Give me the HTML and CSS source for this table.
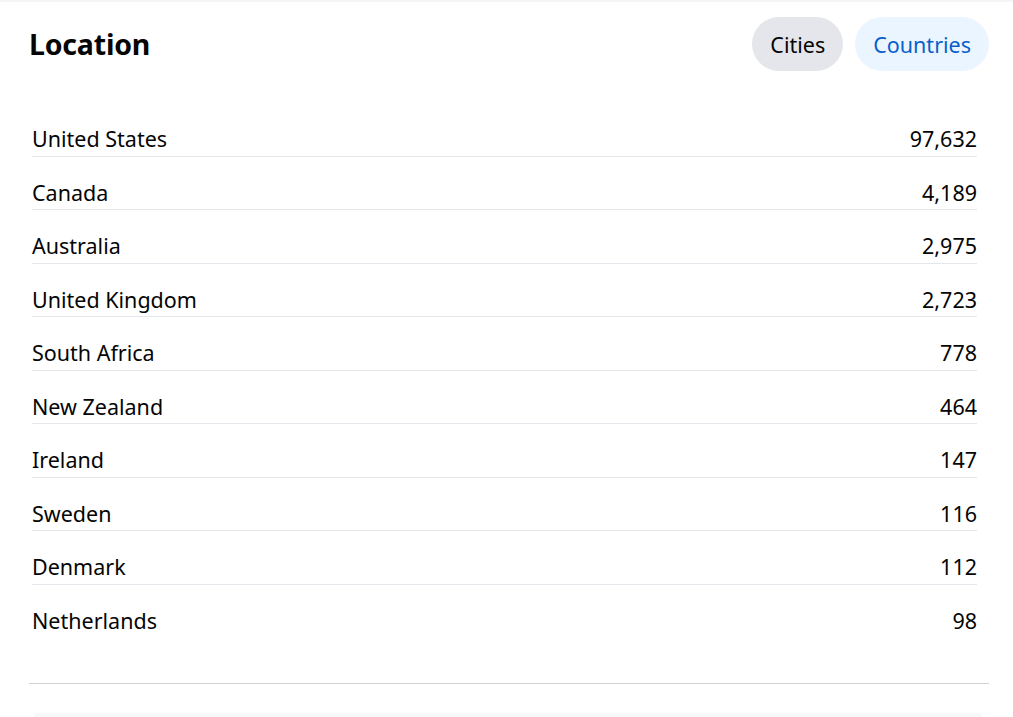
FILE: index.html
```html
<!DOCTYPE html>
<html lang="en">
<head>
<meta charset="utf-8">
<title>Location</title>
<link rel="stylesheet" href="styles.css">
</head>
<body>
<div class="page">
  <section class="card">
    <header class="card-head">
      <h2 class="title">Location</h2>
      <div class="tabs">
        <button class="tab">Cities</button>
        <button class="tab tab-active">Countries</button>
      </div>
    </header>
    <ul class="list">
      <li class="row"><span class="name">United States</span><span class="num">97,632</span></li>
      <li class="row"><span class="name">Canada</span><span class="num">4,189</span></li>
      <li class="row"><span class="name">Australia</span><span class="num">2,975</span></li>
      <li class="row"><span class="name">United Kingdom</span><span class="num">2,723</span></li>
      <li class="row"><span class="name">South Africa</span><span class="num">778</span></li>
      <li class="row"><span class="name">New Zealand</span><span class="num">464</span></li>
      <li class="row"><span class="name">Ireland</span><span class="num">147</span></li>
      <li class="row"><span class="name">Sweden</span><span class="num">116</span></li>
      <li class="row"><span class="name">Denmark</span><span class="num">112</span></li>
      <li class="row"><span class="name">Netherlands</span><span class="num">98</span></li>
    </ul>
    <div class="divider"></div>
  </section>
  <div class="next-card"></div>
</div>
</body>
</html>
```
FILE: styles.css
```css
* { box-sizing: border-box; }
html, body { margin: 0; padding: 0; background: #ffffff; }
body {
  font-family: "Noto Sans", "Segoe UI", sans-serif;
  color: #050505;
  overflow: hidden;
}
.page {
  border-top: 2px solid #f4f5f6;
}
.card {
  padding: 15px 24px 0 29px;
}
.card-head {
  display: flex;
  align-items: center;
  justify-content: space-between;
  height: 54px;
}
.title {
  margin: 0;
  font-size: 28.5px;
  font-weight: 700;
  letter-spacing: -0.2px;
}
.tabs {
  display: flex;
  gap: 12px;
}
.tab {
  font-family: inherit;
  font-size: 21.5px;
  height: 54px;
  padding: 0 18px;
  border: none;
  border-radius: 27px;
  background: #e4e6eb;
  color: #050505;
}
.tab-active {
  background: #ebf5ff;
  color: #0a5fc9;
}
.list {
  list-style: none;
  margin: 32px 12px 0 3px;
  padding: 0;
}
.row {
  display: flex;
  justify-content: space-between;
  align-items: flex-end;
  font-size: 21.5px;
  line-height: 28px;
  padding: 22px 0 2.5px;
  border-bottom: 1px solid #e4e6eb;
}
.row:last-child { border-bottom: none; }
.divider {
  margin-top: 45.5px;
  height: 1px;
  background: #cfd1d4;
}
.next-card {
  margin: 29px 30px 0 33px;
  height: 20px;
  background: #f7f8fa;
  border-radius: 6px 6px 0 0;
}
```
